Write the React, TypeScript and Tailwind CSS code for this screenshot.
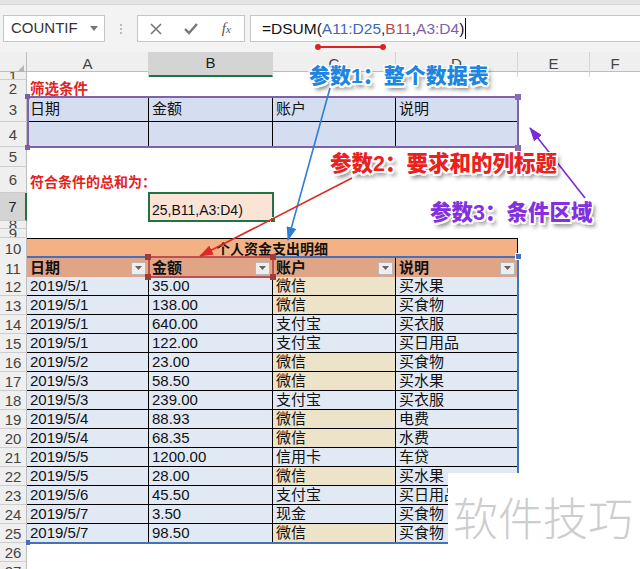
import React from "react";

const G = "grid grid-cols-[27px_122px_124px_123px_122px_72px_1fr]";

type RowProps = { n: string | number; h: string; sel?: boolean; children?: React.ReactNode };

function Row({ n, h, sel, children }: RowProps) {
  return (
    <div className={`${G} ${h}`}>
      <div
        className={
          sel
            ? "flex items-center justify-center overflow-hidden border-b border-[#c9c9c9] border-r-2 border-r-[#217346] bg-[#d4d4d4] text-[15px] leading-none text-[#222]"
            : "flex items-center justify-center overflow-hidden border-b border-r border-[#cdcdcd] border-r-[#bdbdbd] bg-[#efefef] text-[15px] leading-none text-[#444]"
        }
      >
        {n}
      </div>
      {children}
    </div>
  );
}

const data: [string, string, string, string][] = [
  ["2019/5/1", "35.00", "微信", "买水果"],
  ["2019/5/1", "138.00", "微信", "买食物"],
  ["2019/5/1", "640.00", "支付宝", "买衣服"],
  ["2019/5/1", "122.00", "支付宝", "买日用品"],
  ["2019/5/2", "23.00", "微信", "买食物"],
  ["2019/5/3", "58.50", "微信", "买水果"],
  ["2019/5/3", "239.00", "支付宝", "买衣服"],
  ["2019/5/4", "88.93", "微信", "电费"],
  ["2019/5/4", "68.35", "微信", "水费"],
  ["2019/5/5", "1200.00", "信用卡", "车贷"],
  ["2019/5/5", "28.00", "微信", "买水果"],
  ["2019/5/6", "45.50", "支付宝", "买日用品"],
  ["2019/5/7", "3.50", "现金", "买食物"],
  ["2019/5/7", "98.50", "微信", "买食物"],
];

const dc =
  "flex items-end overflow-hidden whitespace-nowrap border-b border-r border-black pl-[3px] text-[15px] leading-[18px] text-[#111]";

function Filter() {
  return (
    <div className="mr-[2px] flex h-[13px] w-[15px] items-center justify-center border border-[#b8b8b8] bg-[#eeeeee]">
      <svg width="7" height="4" viewBox="0 0 7 4">
        <path d="M0,0 L7,0 L3.5,4 Z" fill="#666" />
      </svg>
    </div>
  );
}

export default function App() {
  return (
    <div className="relative h-[569px] w-[640px] overflow-hidden bg-white [font-family:'Liberation_Sans','Noto_Sans_CJK_SC',sans-serif]">
      {/* formula bar */}
      <div className="h-[52px] bg-[#f3f3f3]">
        <div className="h-[5px] border-b border-[#d6d6d6] bg-[#e4e4e4]" />
        <div className="mt-[10px] flex h-[27px] pl-[3px]">
          <div className="flex w-[102px] items-center justify-between border border-[#c6c6c6] bg-white pl-[7px] pr-[6px] text-[15px] text-[#333]">
            <span>COUNTIF</span>
            <svg width="8" height="5" viewBox="0 0 8 5">
              <path d="M0,0 L8,0 L4,5 Z" fill="#777" />
            </svg>
          </div>
          <div className="flex w-[32px] items-center justify-center">
            <svg width="4" height="12" viewBox="0 0 4 12">
              <circle cx="2" cy="2" r="1" fill="#a8a8a8" />
              <circle cx="2" cy="6" r="1" fill="#a8a8a8" />
              <circle cx="2" cy="10" r="1" fill="#a8a8a8" />
            </svg>
          </div>
          <div className="flex w-[108px] items-center border border-[#c6c6c6] bg-white">
            <div className="flex w-[36px] justify-center">
              <svg width="12" height="12" viewBox="0 0 12 12">
                <path d="M1,1 L11,11 M11,1 L1,11" stroke="#777" strokeWidth="1.6" />
              </svg>
            </div>
            <div className="flex w-[36px] justify-center">
              <svg width="14" height="12" viewBox="0 0 14 12">
                <path d="M1,6 L5,10 L13,1" stroke="#777" strokeWidth="2.4" fill="none" />
              </svg>
            </div>
            <div className="flex w-[36px] justify-center text-[15px] italic text-[#555] [font-family:'Liberation_Serif',serif]">
              <span>f</span>
              <span className="mt-[4px] text-[11px]">x</span>
            </div>
          </div>
          <div className="ml-[5px] flex flex-1 items-center border border-r-0 border-[#c6c6c6] bg-white pl-[11px] text-[15.5px] text-[#111]">
            <span>=DSUM(</span>
            <span className="text-[#3f69b3]">A11:D25</span>
            <span>,</span>
            <span className="text-[#b84a47]">B11</span>
            <span>,</span>
            <span className="text-[#7f5ea8]">A3:D4</span>
            <span>)</span>
            <span className="ml-[1px] h-[21px] w-[1px] bg-black" />
          </div>
        </div>
      </div>

      {/* column headers */}
      <div className={`${G} h-[20px] border-b border-[#bdbdbd] bg-[#efefef] text-[15px] text-[#444]`}>
        <div className="flex items-end justify-end border-r border-[#bdbdbd] pb-[2px] pr-[2px]">
          <svg width="10" height="10" viewBox="0 0 10 10">
            <path d="M10,0 L10,10 L0,10 Z" fill="#b5b5b5" />
          </svg>
        </div>
        <div className="flex items-center justify-center border-r border-[#d4d4d4]">A</div>
        <div className="flex items-center justify-center border-b-2 border-r border-[#d4d4d4] border-b-[#217346] bg-[#d4d4d4] text-[#222]">
          B
        </div>
        <div className="flex items-center justify-center border-r border-[#d4d4d4]">C</div>
        <div className="flex items-center justify-center border-r border-[#d4d4d4]">D</div>
        <div className="flex items-center justify-center border-r border-[#d4d4d4]">E</div>
        <div className="flex items-center justify-center">F</div>
      </div>

      {/* sheet rows */}
      <Row n="1" h="h-[8px]" />
      <Row n="2" h="h-[17px]">
        <div className="col-span-2 flex items-end pl-[3px] text-[14.5px] font-bold leading-[18px] text-[#e3231c]">筛选条件</div>
      </Row>
      <Row n="3" h="h-[25px]">
        <div className="flex items-center border-b border-r border-black bg-[#d5ddf0] pl-[3px] text-[15px] text-[#111]">日期</div>
        <div className="flex items-center border-b border-r border-black bg-[#d5ddf0] pl-[3px] text-[15px] text-[#111]">金额</div>
        <div className="flex items-center border-b border-r border-black bg-[#d5ddf0] pl-[3px] text-[15px] text-[#111]">账户</div>
        <div className="flex items-center border-b border-black bg-[#d5ddf0] pl-[3px] text-[15px] text-[#111]">说明</div>
      </Row>
      <Row n="4" h="h-[25px]">
        <div className="border-r border-black bg-[#d5ddf0]" />
        <div className="border-r border-black bg-[#d5ddf0]" />
        <div className="border-r border-black bg-[#d5ddf0]" />
        <div className="bg-[#d5ddf0]" />
      </Row>
      <Row n="5" h="h-[20px]" />
      <Row n="6" h="h-[26px]">
        <div className="col-span-2 flex items-end pb-[2px] pl-[3px] text-[14px] font-bold leading-[18px] text-[#e3231c]">
          符合条件的总和为：
        </div>
      </Row>
      <Row n="7" h="h-[28px]" sel>
        <div />
        <div className="flex items-end bg-[#fbe3d6] pb-[2px] pl-[3px] text-[14px] leading-[18px] text-[#111]">25,B11,A3:D4)</div>
      </Row>
      <Row n="8" h="h-[8px]" />
      <Row n="9" h="h-[9px]" />
      <Row n="10" h="h-[19px]">
        <div className="col-span-4 flex items-center justify-center border-r border-t border-black bg-[#f4b183] text-[14px] font-bold text-[#111]">
          个人资金支出明细
        </div>
      </Row>
      <Row n="11" h="h-[20px]">
        {["日期", "金额", "账户", "说明"].map((t) => (
          <div key={t} className="flex items-center justify-between border-b border-r border-black bg-[#e0a487] pl-[3px] text-[15px] font-bold text-[#111]">
            <span>{t}</span>
            <Filter />
          </div>
        ))}
      </Row>
      {data.map((d, i) => (
        <Row key={i} n={String(12 + i)} h="h-[19px]">
          <div className={`${dc} bg-[#e1e9f5]`}>{d[0]}</div>
          <div className={`${dc} bg-[#e1e9f5]`}>{d[1]}</div>
          <div className={`${dc} ${d[2] === "微信" ? "bg-[#ece3c8]" : "bg-[#e1e9f5]"}`}>{d[2]}</div>
          <div className={`${dc} bg-[#e1e9f5]`}>{d[3]}</div>
        </Row>
      ))}
      <Row n="26" h="h-[19px]" />
      <Row n="27" h="h-[19px]" />

      {/* range highlights */}
      <div className="absolute left-[27px] top-[96px] h-[52px] w-[492px] border-2 border-[#8062a8]" />
      <div className="absolute left-[25px] top-[94px] h-[5px] w-[5px] bg-[#7e5ca8]" />
      <div className="absolute left-[515px] top-[94px] h-[6px] w-[6px] bg-[#8a6ab4]" />
      <div className="absolute left-[25px] top-[145px] h-[5px] w-[5px] bg-[#7e5ca8]" />
      <div className="absolute left-[515px] top-[145px] h-[6px] w-[6px] bg-[#8a6ab4]" />

      <div className="absolute left-[148px] top-[192px] h-[30px] w-[126px] border-2 border-[#217346]" />
      <div className="absolute left-[270px] top-[217px] h-[6px] w-[6px] border border-white bg-[#217346]" />

      <div className="absolute left-[27px] top-[256px] h-[288px] w-[492px] border-b-2 border-r-2 border-t-2 border-[#4670b8]" />
      <div className="absolute left-[515px] top-[253px] h-[7px] w-[7px] border border-white bg-[#4670b8]" />
      <div className="absolute left-[26px] top-[540px] h-[5px] w-[4px] bg-[#4670b8]" />

      <div className="absolute left-[148px] top-[256px] h-[22px] w-[126px] border-2 border-[#c0504d]" />
      <div className="absolute left-[145px] top-[254px] h-[6px] w-[6px] bg-[#a33a38]" />
      <div className="absolute left-[270px] top-[254px] h-[6px] w-[6px] bg-[#a33a38]" />
      <div className="absolute left-[145px] top-[274px] h-[6px] w-[6px] bg-[#a33a38]" />
      <div className="absolute left-[270px] top-[274px] h-[6px] w-[6px] bg-[#a33a38]" />

      {/* arrows */}
      <svg className="pointer-events-none absolute left-0 top-0" width="640" height="569">
        <defs>
          <marker id="mb" viewBox="0 0 14 10" refX="13" refY="5" markerWidth="14" markerHeight="10" markerUnits="userSpaceOnUse" orient="auto">
            <path d="M0,0 L14,5 L0,10 Z" fill="#2d7fd6" />
          </marker>
          <marker id="mr" viewBox="0 0 14 10" refX="13" refY="5" markerWidth="14" markerHeight="10" markerUnits="userSpaceOnUse" orient="auto">
            <path d="M0,0 L14,5 L0,10 Z" fill="#dc2a26" />
          </marker>
          <marker id="mp" viewBox="0 0 14 10" refX="13" refY="5" markerWidth="14" markerHeight="10" markerUnits="userSpaceOnUse" orient="auto">
            <path d="M0,0 L14,5 L0,10 Z" fill="#7a2ad8" />
          </marker>
        </defs>
        <line x1="330" y1="88" x2="288" y2="240" stroke="#2d7fd6" strokeWidth="1.6" markerEnd="url(#mb)" />
        <line x1="352" y1="178" x2="200" y2="256" stroke="#dc2a26" strokeWidth="1.6" markerEnd="url(#mr)" />
        <line x1="585" y1="198" x2="530" y2="128" stroke="#7a2ad8" strokeWidth="1.6" markerEnd="url(#mp)" />
        <line x1="318" y1="47" x2="383" y2="47" stroke="#e0211d" strokeWidth="2" />
        <circle cx="318" cy="47" r="3" fill="#e0211d" />
        <circle cx="383" cy="47" r="3" fill="#e0211d" />
      </svg>

      {/* annotations */}
      <div className="absolute left-[309px] top-[65px] whitespace-nowrap text-[21px] font-black leading-none text-[#1f86e0] [text-shadow:-1.5px_-1.5px_0_#fff,1.5px_-1.5px_0_#fff,-1.5px_1.5px_0_#fff,1.5px_1.5px_0_#fff,0_2px_0_#fff,2px_0_0_#fff,3px_4px_4px_rgba(0,0,0,0.55)]">
        参数1：整个数据表
      </div>
      <div className="absolute left-[330px] top-[154px] whitespace-nowrap text-[21.5px] font-black leading-none text-[#e8231f] [text-shadow:-1.5px_-1.5px_0_#fff,1.5px_-1.5px_0_#fff,-1.5px_1.5px_0_#fff,1.5px_1.5px_0_#fff,0_2px_0_#fff,2px_0_0_#fff,3px_4px_4px_rgba(0,0,0,0.55)]">
        参数2：要求和的列标题
      </div>
      <div className="absolute left-[430px] top-[203px] whitespace-nowrap text-[21.5px] font-black leading-none text-[#8230e0] [text-shadow:-1.5px_-1.5px_0_#fff,1.5px_-1.5px_0_#fff,-1.5px_1.5px_0_#fff,1.5px_1.5px_0_#fff,0_2px_0_#fff,2px_0_0_#fff,3px_4px_4px_rgba(0,0,0,0.55)]">
        参数3：条件区域
      </div>

      {/* watermark */}
      <div className="absolute left-[448px] top-[473px] h-[96px] w-[192px] bg-white pl-[5px] pt-[21px]">
        <div className="whitespace-nowrap text-[45px] font-light leading-none text-[#cdcdcd] [font-family:'Noto_Sans_CJK_SC',sans-serif]">
          软件技巧
        </div>
      </div>
    </div>
  );
}
